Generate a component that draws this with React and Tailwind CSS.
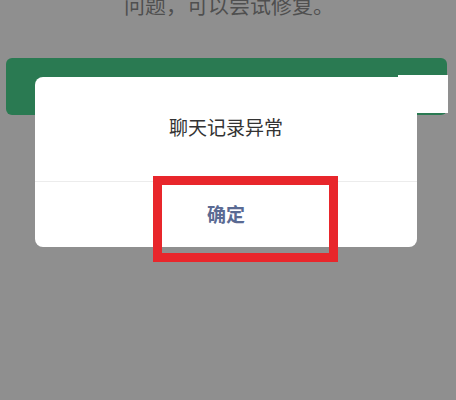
import React from "react";

const font = { fontFamily: '"Noto Sans CJK SC", "Noto Sans", sans-serif' };

const App = () => {
  return (
    <div
      className="relative w-[456px] h-[400px] overflow-hidden bg-[#8f8f8f]"
      style={font}
    >
      {/* Page behind the mask */}
      <div className="flex flex-col">
        <p className="-mt-[12px] h-[32px] text-center text-[21px] leading-[32px] text-[#4f4f4f] pl-[2px]">
          问题，可以尝试修复。
        </p>
        <div className="mt-[38px] ml-[6px] w-[441px] h-[57px] rounded-[6px] bg-[#2a7a52]" />
      </div>

      {/* Screenshot artifact */}
      <div className="absolute left-[398px] top-[75px] w-[50px] h-[38px] bg-white" />

      {/* Dialog */}
      <div className="absolute left-[35px] top-[77px] w-[382px] h-[170px] rounded-[8px] bg-white flex flex-col">
        <div className="flex-1 flex items-center justify-center text-[19px] text-[#333] pb-[4px]">
          聊天记录异常
        </div>
        <div className="h-[66px] border-t border-[#ececec] flex items-center justify-center text-[19px] font-bold text-[#5a6a93]">
          确定
        </div>
      </div>

      {/* Red highlight */}
      <div className="absolute left-[153px] top-[176px] w-[185px] h-[86px] border-[9px] border-[#e8262b]" />
    </div>
  );
};

export default App;
